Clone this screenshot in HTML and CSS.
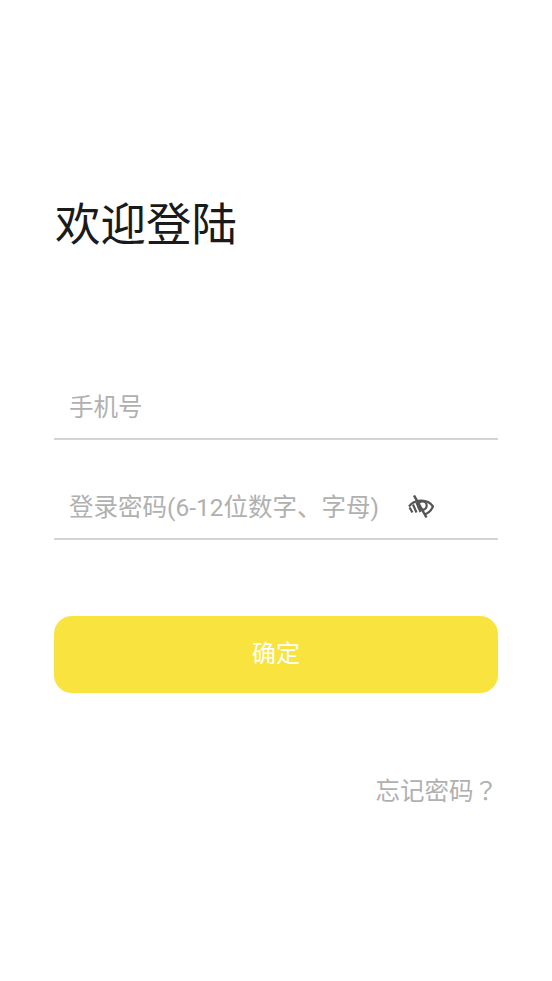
FILE: index.html
```html
<!DOCTYPE html>
<html lang="zh-CN">
<head>
  <meta charset="UTF-8" />
  <meta name="viewport" content="width=device-width, initial-scale=1" />
  <title>欢迎登陆</title>
  <link rel="stylesheet" href="styles.css">
</head>
<body>

<div class="container">
  <h1>欢迎登陆</h1>

  <form id="loginForm">
    <div class="form-group">
      <input type="tel" placeholder="手机号" />
    </div>
    <div class="form-group">
      <input type="password" placeholder="登录密码(6-12位数字、字母)" />
      <svg class="eye" viewBox="0 0 26 24" width="26" height="24" fill="none" stroke="#555" aria-hidden="true">
        <path d="M1 11.500 C6 4.500 19 3 25 11.500 C23 16 20 18.500 16 19.500" stroke-width="2.200"/>
        <circle cx="14.500" cy="10.500" r="4.200" stroke-width="2.200"/>
        <path d="M1.500 12.500 L4.500 17.500 M5 9.500 L8.500 17.500 M8.500 7.500 L12.500 17" stroke-width="2.200"/>
        <path d="M6 0.500 L18.500 22.500" stroke-width="2.400"/>
      </svg>
    </div>
    <button type="submit">确定</button>
  </form>

  <a class="forgot" href="#">忘记密码<span class="mark" lang="zh-TW">？</span></a>
</div>

</body>
</html>
```

FILE: styles.css
```css
body {
  font-family: Roboto, "Noto Sans CJK SC", sans-serif;
  background-color: white;
  margin: 0; padding: 0;
}
.container {
  padding: 196px 54px 0;
}
h1 {
  margin: 0 0 112px;
  padding-left: 1px;
  font-size: 45.500px;
  line-height: 60px;
  font-weight: 400;
  color: #1a1a1a;
}
.form-group {
  position: relative;
  height: 98px;
  margin-bottom: 2px;
  display: flex;
  align-items: flex-end;
  border-bottom: 2px solid #d4d4d4;
  box-sizing: border-box;
}
.form-group:first-child {
  height: 72px;
}
.form-group input {
  width: 100%;
  height: 54px;
  padding: 0 15px;
  margin-bottom: 4px;
  box-sizing: border-box;
  border: none;
  outline: none;
  background: none;
  font-family: inherit;
  font-size: 24.500px;
  color: #333;
}
.form-group input::placeholder {
  color: #b0b0b0;
  opacity: 1;
}
.eye {
  position: absolute;
  left: 354px;
  top: 53px;
}
button {
  display: block;
  width: 100%;
  height: 77px;
  margin-top: 76px;
  padding: 0 0 6px;
  background-color: #f9e33e;
  color: white;
  font-family: inherit;
  font-size: 24px;
  border: none;
  border-radius: 18px;
}
.forgot {
  display: block;
  margin-top: 80px;
  text-align: right;
  font-size: 24.500px;
  line-height: 34px;
  color: #b0b0b0;
  text-decoration: none;
}
.mark {
  font-family: "Noto Sans CJK TC", sans-serif;
}
```
